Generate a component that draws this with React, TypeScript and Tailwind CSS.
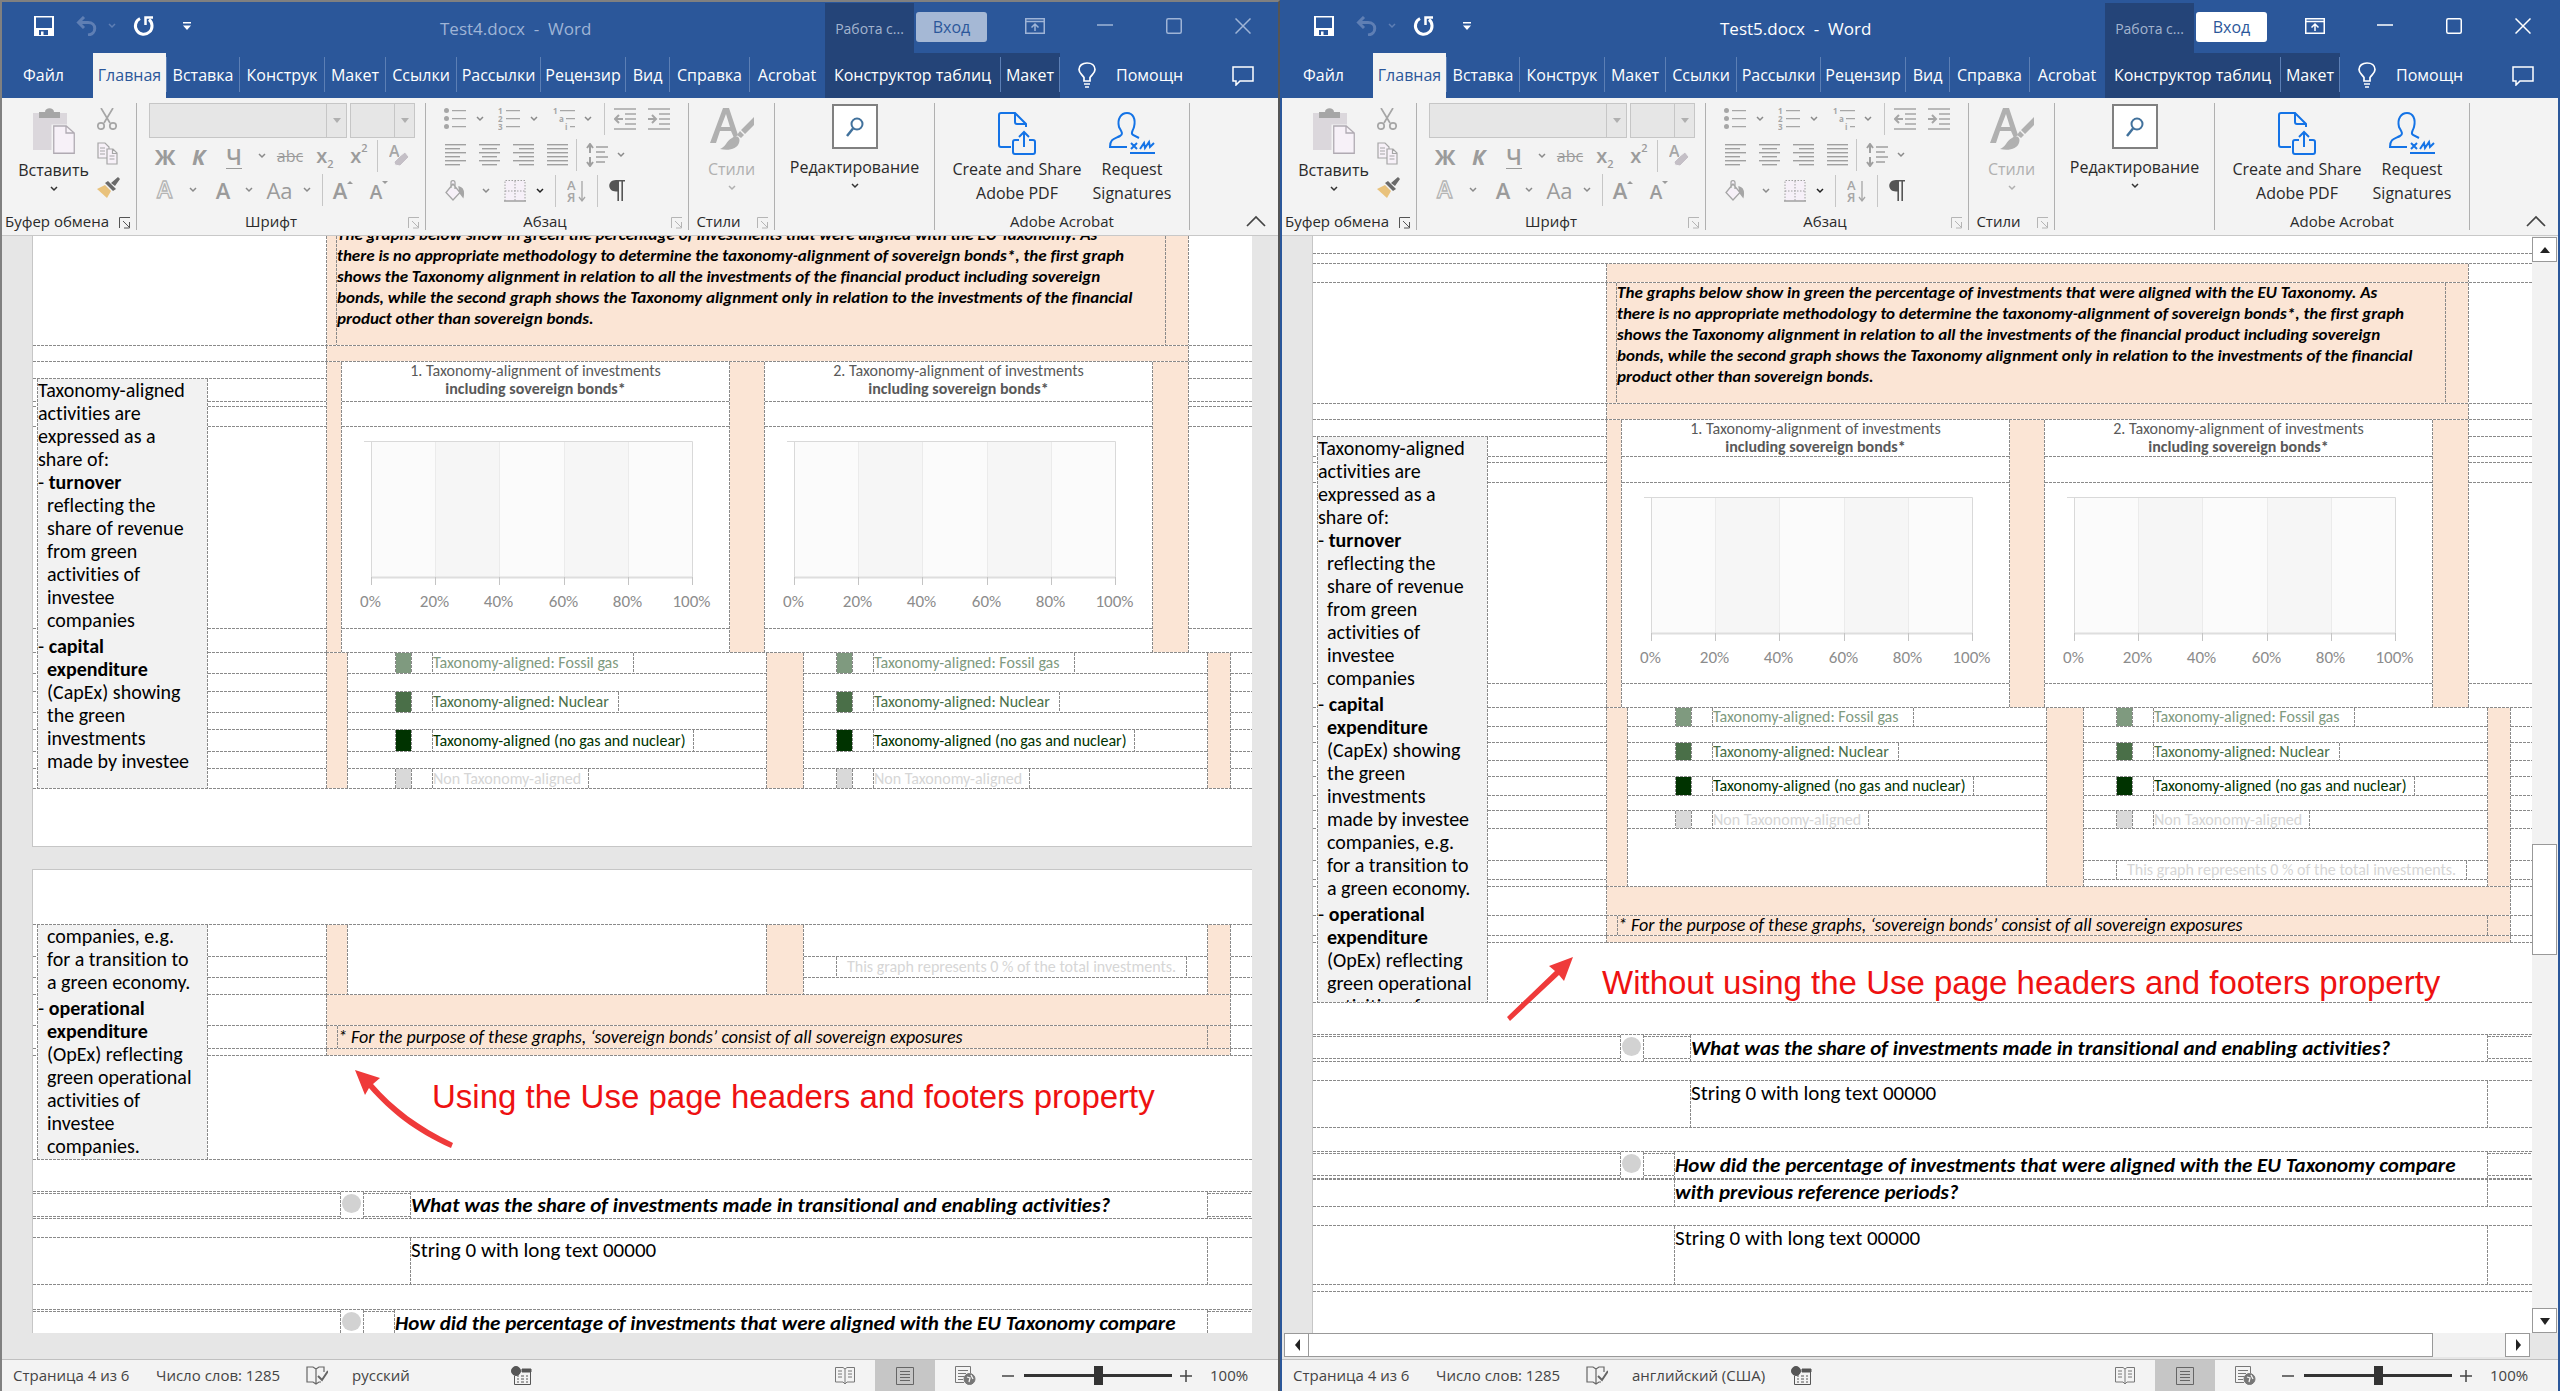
import type { ReactNode } from "react";

const H_LINE = "h-px shrink-0 bg-[repeating-linear-gradient(90deg,#8a8a8a_0_3px,transparent_3px_4px)]";
const V_LINE = "w-px shrink-0 self-stretch bg-[repeating-linear-gradient(180deg,#8a8a8a_0_3px,transparent_3px_4px)]";
const PEACH = "bg-[#fbe5d5]";

const H = () => <div className={H_LINE} />;
const V = () => <div className={V_LINE} />;

/* ---------- small drawing helpers ---------- */

function Chevron({ color = "#8a8a8a" }: { color?: string }) {
  return (
    <svg width="8" height="6" viewBox="0 0 8 6" fill="none" stroke={color} strokeWidth="1.5">
      <path d="M1 1l3 3 3-3" />
    </svg>
  );
}

function Launcher({ dark = false }: { dark?: boolean }) {
  return (
    <svg width="12" height="12" viewBox="0 0 12 12" fill="none" stroke={dark ? "#555" : "#b5b5b5"}>
      <path d="M0.5 11V0.5H11M4 4l6 6M10.5 5v6H5" />
    </svg>
  );
}

function Tool({ label, width, children }: { label: string; width: string; children: ReactNode }) {
  return (
    <button type="button" aria-label={label} className={`flex h-full shrink-0 items-center justify-center ${width}`}>
      {children}
    </button>
  );
}

function Sep({ className = "" }: { className?: string }) {
  return <div className={`w-px shrink-0 self-stretch bg-[#c6c6c6] ${className}`} />;
}

/* ---------- title bar ---------- */

function TitleBar({ title, active }: { title: string; active: boolean }) {
  const ink = active ? "text-white" : "text-[#9fb4d6]";
  return (
    <header className="flex h-[51px] shrink-0 items-stretch bg-[#2b579a] text-white">
      <div className="flex w-[428px] shrink-0 items-center pb-[3px] pl-8">
        <Tool label="Сохранить" width="w-5">
          <svg width="20" height="20" viewBox="0 0 20 20">
            <path fill="#fff" fillRule="evenodd" d="M0 0h20v20H0zM2 1.5v10.5h16V1.5zM5 14v5h2v-3.500h2.500V19H14v-5z" />
          </svg>
        </Tool>
        <Tool label="Отменить" width="ml-[22px] w-[22px]">
          <svg width="22" height="20" viewBox="0 0 22 20" fill="none" stroke="#5f7fb4" strokeWidth="3">
            <path d="M8 1L2.500 6.500 8 12M3 6.500h9c9 0 9 11.500 0 12.500" />
          </svg>
        </Tool>
        <Tool label="Варианты отмены" width="ml-1 w-5">
          <Chevron color="#5f7fb4" />
        </Tool>
        <Tool label="Повторить" width="ml-[11px] w-[22px]">
          <svg width="22" height="22" viewBox="0 0 22 22" fill="none" stroke="#fff" strokeWidth="3">
            <path d="M7 3.500A8.300 8.300 0 1 0 16 4.500" />
            <path d="M12.500 10V2.500H20" strokeWidth="2.500" />
          </svg>
        </Tool>
        <Tool label="Настройка панели быстрого доступа" width="ml-[22px] w-5">
          <svg width="8" height="8" viewBox="0 0 8 8" fill="#fff">
            <path d="M0 0h8v1.500H0zM0 3.500h8L4 8z" />
          </svg>
        </Tool>
      </div>
      <h1 className={`flex-1 whitespace-pre pl-[10px] pt-[14px] text-[17px] leading-[26px] ${ink}`}>{title}</h1>
      <div className="mt-px flex w-[89px] items-center justify-center bg-[#244478] text-[14px] text-[#a3b4cf]">Работа с...</div>
      <button
        type="button"
        className={`ml-0.5 mt-[10px] h-[30px] w-[71px] rounded-[3px] text-[16px] leading-[30px] text-[#2b579a] ${active ? "bg-white" : "bg-[#a5b8d5]"}`}
      >
        Вход
      </button>
      <div className={`flex w-[291px] items-center pb-[3px] pl-[38px] ${ink}`}>
        <Tool label="Параметры отображения ленты" width="w-5">
          <svg width="20" height="16" viewBox="0 0 20 16" fill="none" stroke="currentColor" strokeWidth="1.5">
            <path d="M0.75 0.75h18.500v14.500H0.750zM1 3.500h18M10 13V6.500M6.500 9.500L10 6l3.500 3.500" />
          </svg>
        </Tool>
        <Tool label="Свернуть" width="ml-[50px] w-5">
          <svg width="16" height="16" viewBox="0 0 16 16" stroke="currentColor" strokeWidth="1.5">
            <path d="M0 7h16" />
          </svg>
        </Tool>
        <Tool label="Развернуть" width="ml-[49px] w-5">
          <svg width="16" height="16" viewBox="0 0 16 16" fill="none" stroke="currentColor" strokeWidth="1.5">
            <rect x="0.75" y="0.75" width="14.5" height="14.5" rx="1.5" />
          </svg>
        </Tool>
        <Tool label="Закрыть" width="ml-[49px] w-5">
          <svg width="16" height="16" viewBox="0 0 16 16" stroke="currentColor" strokeWidth="1.5">
            <path d="M0.5 0.5l15 15M15.500 0.500l-15 15" />
          </svg>
        </Tool>
      </div>
    </header>
  );
}

/* ---------- ribbon tabs ---------- */

const TABS: [string, string][] = [
  ["Вставка", "w-[73px]"],
  ["Конструк", "w-[85px]"],
  ["Макет", "w-[61px]"],
  ["Ссылки", "w-[71px]"],
  ["Рассылки", "w-[84px]"],
  ["Рецензир", "w-[85px]"],
  ["Вид", "w-[44px]"],
  ["Справка", "w-[80px]"],
  ["Acrobat", "w-[75px]"],
];

function TabBar() {
  return (
    <nav className="flex h-[45px] shrink-0 items-stretch bg-[#2b579a] text-[16px] text-white">
      <button type="button" className="w-[91px] pb-0.5 pr-2">Файл</button>
      <button type="button" className="w-[73px] bg-[#f3f3f3] pb-0.5 text-[#2b579a]">Главная</button>
      {TABS.map(([name, width]) => (
        <button key={name} type="button" className={`mb-1.5 mt-1 shrink-0 whitespace-nowrap border-l border-[#5c7fb5] ${width}`}>
          {name}
        </button>
      ))}
      <div className="ml-px flex bg-[#244478] pb-1.5 pt-1">
        <button type="button" className="w-[175px] whitespace-nowrap">Конструктор таблиц</button>
        <button type="button" className="w-[60px] border-x border-[#5c7fb5]">Макет</button>
      </div>
      <button type="button" className="flex items-center gap-5 pb-0.5 pl-[18px]">
        <svg width="18" height="26" viewBox="0 0 18 26" fill="none" stroke="#fff" strokeWidth="1.7">
          <path d="M6 19v-3.500C4 12.500 1 11 1 7.500 1 3.500 4.500 1 9 1s8 2.500 8 6.500c0 3.500-3 5-5 8V19zM6 22h6M7 25h4" />
        </svg>
        Помощн
      </button>
      <button type="button" aria-label="Примечания" className="ml-auto pr-6">
        <svg width="22" height="20" viewBox="0 0 22 20" fill="none" stroke="#fff" strokeWidth="1.5">
          <path d="M1 1h20v14H8l-4 4v-4H1z" />
        </svg>
      </button>
    </nav>
  );
}

/* ---------- ribbon ---------- */

function Group({ label, width, labelClass = "text-center", launcher, children }: {
  label?: string;
  width: string;
  labelClass?: string;
  launcher?: "dark" | "light";
  children: ReactNode;
}) {
  return (
    <section className={`my-[5px] flex shrink-0 flex-col border-r border-[#b0b0b0] ${width}`}>
      <div className="h-[109px]">{children}</div>
      <div className="relative flex h-[18px] items-center">
        <span className={`w-full whitespace-nowrap text-[15px] leading-[22px] ${labelClass}`}>{label}</span>
        {launcher && (
          <button type="button" aria-label={`Параметры: ${label}`} className="absolute right-[5px] top-[5px]">
            <Launcher dark={launcher === "dark"} />
          </button>
        )}
      </div>
    </section>
  );
}

function ListIcon({ kind }: { kind: "dot" | "num" | "multi" }) {
  return (
    <svg width="22" height="22" viewBox="0 0 22 22" fill="#a6a6a6" className="font-['Open_Sans',sans-serif] text-[8px] font-bold">
      {kind === "dot" && <path d="M8 2h14v1.300H8zM8 10h14v1.300H8zM8 18h14v1.300H8zM0 2.600a2.500 2.500 0 1 1 5 0 2.500 2.500 0 1 1-5 0M0 10.600a2.500 2.500 0 1 1 5 0 2.500 2.500 0 1 1-5 0M0 18.600a2.500 2.500 0 1 1 5 0 2.500 2.500 0 1 1-5 0" />}
      {kind === "num" && (
        <>
          <path d="M8 2h14v1.300H8zM8 10h14v1.300H8zM8 18h14v1.300H8z" />
          <text x="0" y="6">1</text>
          <text x="0" y="14">2</text>
          <text x="0" y="22">3</text>
        </>
      )}
      {kind === "multi" && (
        <>
          <path d="M7 2h15v1.300H7zM13 10h9v1.300h-9zM17 18h5v1.300h-5z" />
          <text x="0" y="6">1</text>
          <text x="6" y="14">a</text>
          <text x="12" y="22">i</text>
        </>
      )}
    </svg>
  );
}

function AlignIcon({ kind }: { kind: "left" | "center" | "right" | "full" }) {
  const start = { left: 0, center: 3, right: 6, full: 0 }[kind];
  const short = kind === "full" ? 21 : 15;
  return (
    <svg width="21" height="22" viewBox="0 0 21 22" fill="#a0a0a0">
      {[0, 4, 8, 12, 16, 20].map((y, i) => (
        <rect key={y} x={i % 2 ? start : 0} y={y} width={i % 2 ? short : 21} height="1.4" />
      ))}
    </svg>
  );
}

function IndentIcon({ out }: { out: boolean }) {
  return (
    <svg width="22" height="22" viewBox="0 0 22 22" fill="none" stroke="#a6a6a6" strokeWidth="1.3">
      <path d="M0 1h22M11 6h11M11 11h11M11 16h11M0 21h22" />
      <path strokeWidth="2" d={out ? "M9 11H1M5 7l-4 4 4 4" : "M0 11h8M4 7l4 4-4 4"} />
    </svg>
  );
}

function FontGroup() {
  const glyph = "text-[22px] leading-6 text-[#9b9b9b]";
  return (
    <div className="flex flex-col pl-3">
      <div className="flex gap-[3px]">
        {[
          ["Шрифт", "w-[198px]", "w-[20px]"],
          ["Размер шрифта", "w-[65px]", "w-[20px]"],
        ].map(([label, width, arrow]) => (
          <div key={label} className={`relative flex h-[35px] border border-[#c6c6c6] bg-[#e6e6e6] ${width}`}>
            <select aria-label={label} disabled className="w-full appearance-none bg-transparent opacity-0">
              <option />
            </select>
            <div className={`pointer-events-none flex shrink-0 items-center justify-center border-l border-[#c6c6c6] ${arrow}`}>
              <svg width="8" height="5" viewBox="0 0 8 5" fill="#b0b0b0"><path d="M0 0h8L4 5z" /></svg>
            </div>
          </div>
        ))}
      </div>
      <div className="mt-0.5 flex h-8 items-center">
        <Tool label="Полужирный" width="w-8"><span className={`font-bold ${glyph}`}>Ж</span></Tool>
        <Tool label="Курсив" width="w-[35px]"><span className={`font-bold italic ${glyph}`}>К</span></Tool>
        <Tool label="Подчеркнутый" width="w-9"><span className={`border-b border-[#9b9b9b] font-semibold ${glyph}`}>Ч</span></Tool>
        <Tool label="Варианты подчеркивания" width="w-5"><Chevron /></Tool>
        <Tool label="Зачеркнутый" width="w-[36px]"><span className="text-[16px] leading-6 text-[#9b9b9b] line-through">abc</span></Tool>
        <Tool label="Подстрочный" width="w-[34px]">
          <span className="text-[20px] font-semibold leading-6 text-[#9b9b9b]">x</span>
          <span className="self-end text-[11px] font-semibold leading-4 text-[#9b9b9b]">2</span>
        </Tool>
        <Tool label="Надстрочный" width="w-[34px]">
          <span className="text-[20px] font-semibold leading-6 text-[#9b9b9b]">x</span>
          <span className="self-start text-[11px] font-semibold leading-4 text-[#9b9b9b]">2</span>
        </Tool>
        <Sep className="ml-px" />
        <Tool label="Удалить форматирование" width="w-[42px]">
          <svg width="20" height="22" viewBox="0 0 20 22" fill="#a6a6a6" className="font-['Open_Sans',sans-serif] text-[16px] font-semibold">
            <text x="0" y="12">A</text>
            <path d="M11 11l5-4 4 5-9 9-5-1-1-3z" fill="#c4bfc6" stroke="#f3f3f3" />
          </svg>
        </Tool>
      </div>
      <div className="mt-0.5 flex h-8 items-center">
        <Tool label="Текстовые эффекты" width="w-8">
          <svg width="20" height="22" viewBox="0 0 20 22" fill="#f6f6f6" stroke="#b4b4b4" strokeWidth="1.3" className="font-['Open_Sans',sans-serif] text-[23px] font-semibold">
            <text x="2" y="19">A</text>
          </svg>
        </Tool>
        <Tool label="Варианты эффектов" width="w-[23px]"><Chevron /></Tool>
        <Tool label="Цвет текста" width="ml-[3px] w-8"><span className={`font-semibold ${glyph}`}>A</span></Tool>
        <Tool label="Варианты цвета" width="w-[20px]"><Chevron /></Tool>
        <Tool label="Регистр" width="w-[41px]"><span className={glyph}>Aa</span></Tool>
        <Tool label="Варианты регистра" width="w-[14px]"><Chevron /></Tool>
        <Sep className="ml-2" />
        <Tool label="Увеличить размер" width="w-[40px]">
          <span className={`font-semibold ${glyph}`}>A</span>
          <svg width="6" height="20" viewBox="0 0 6 20" fill="#9b9b9b"><path d="M0 4l3-3 3 3z" /></svg>
        </Tool>
        <Tool label="Уменьшить размер" width="w-[32px]">
          <span className="pt-1 text-[19px] font-semibold leading-6 text-[#9b9b9b]">A</span>
          <svg width="6" height="20" viewBox="0 0 6 20" fill="#9b9b9b"><path d="M0 1l3 3 3-3z" /></svg>
        </Tool>
      </div>
    </div>
  );
}

function ParagraphGroup() {
  return (
    <div className="flex flex-col pl-3">
      <div className="flex h-8 items-center">
        <Tool label="Маркеры" width="ml-1 w-[25px]"><ListIcon kind="dot" /></Tool>
        <Tool label="Варианты маркеров" width="ml-1 w-[18px]"><Chevron /></Tool>
        <Tool label="Нумерация" width="ml-2 w-[24px]"><ListIcon kind="num" /></Tool>
        <Tool label="Варианты нумерации" width="w-[26px]"><Chevron /></Tool>
        <Tool label="Многоуровневый список" width="ml-1 w-[25px]"><ListIcon kind="multi" /></Tool>
        <Tool label="Варианты списка" width="w-[24px]"><Chevron /></Tool>
        <Sep className="ml-1" />
        <Tool label="Уменьшить отступ" width="ml-2 w-6"><IndentIcon out /></Tool>
        <Tool label="Увеличить отступ" width="ml-[10px] w-6"><IndentIcon out={false} /></Tool>
      </div>
      <div className="mt-1 flex h-8 items-center">
        {(["left", "center", "right", "full"] as const).map((kind) => (
          <Tool key={kind} label={kind} width="w-[34px]"><AlignIcon kind={kind} /></Tool>
        ))}
        <Sep className="ml-0.5" />
        <Tool label="Интервал" width="w-[40px]">
          <svg width="22" height="24" viewBox="0 0 22 24" fill="none" stroke="#a0a0a0" strokeWidth="1.4">
            <path d="M10 4h12M10 9h9M10 14h12M10 19h9" />
            <path strokeWidth="2" d="M4 1v9M4 14v9M1 5l3-4 3 4M1 19l3 4 3-4" />
          </svg>
        </Tool>
        <Tool label="Варианты интервала" width="w-2"><Chevron /></Tool>
      </div>
      <div className="mt-1 flex h-8 items-center">
        <Tool label="Заливка" width="w-[34px]">
          <svg width="20" height="22" viewBox="0 0 20 22" fill="#f6f0f8" stroke="#a6a6a6" strokeWidth="1.3">
            <path d="M8 4L1 12.500 8 20l7-7.500zM6 8V2.500C6 0 10 0 10 2.500V9" />
            <path d="M14 7c4 1 5 5 4 10l-3-4z" fill="#a6a6a6" />
          </svg>
        </Tool>
        <Tool label="Варианты заливки" width="ml-[5px] w-[18px]"><Chevron /></Tool>
        <Tool label="Границы" width="ml-2 w-[24px]">
          <svg width="22" height="22" viewBox="0 0 22 22" fill="#f6f0f8" stroke="#a0a0a0">
            <path strokeDasharray="1.5 1.5" d="M1 21V0.500h20V21M11 1v20M1 11h20" />
            <path d="M0 21h22" strokeWidth="1.5" />
          </svg>
        </Tool>
        <Tool label="Варианты границ" width="w-[26px]"><Chevron color="#222" /></Tool>
        <Sep className="ml-[2px]" />
        <Tool label="Сортировка" width="w-[41px]">
          <svg width="20" height="24" viewBox="0 0 20 24" fill="#a6a6a6" className="font-['Open_Sans',sans-serif] text-[13px] font-semibold">
            <text x="0" y="11">А</text>
            <text x="0" y="23">Я</text>
            <path d="M15 2v19M12 18l3 4 3-4" fill="none" stroke="#a6a6a6" strokeWidth="1.3" />
          </svg>
        </Tool>
        <Sep />
        <Tool label="Знаки абзаца" width="w-[38px]">
          <svg width="16" height="22" viewBox="0 0 16 22" fill="#555">
            <path d="M16 0v1.600h-2V21h-1.600V1.600H10V21H8.400V11.500H7C-2 11.500-2 0 7 0z" />
          </svg>
        </Tool>
      </div>
    </div>
  );
}

function Ribbon() {
  return (
    <div className="flex h-[138px] shrink-0 items-stretch border-b border-[#c8c8c8] bg-[#f3f3f3] text-[#2a2a2a]">
      <Group label="Буфер обмена" width="w-[135px]" labelClass="pl-[3px] text-left" launcher="dark">
        <div className="flex">
          <button type="button" className="flex w-[87px] flex-col items-center pl-4 pt-[5px] text-[16px]">
            <svg width="42" height="46" viewBox="0 0 42 46">
              <path d="M0 5h34v37H0z" fill="#dbd7dc" />
              <path d="M6 4h6c0-5 9-5 9 0h6v6H6z" fill="#a6a6a6" />
              <path d="M20 18h14l8 8v20H20z" fill="#f7f1f8" stroke="#f3f3f3" strokeWidth="3" />
              <path d="M20.750 18h12.500l8 7v20.250H20.750zM33 18v7h8" fill="#f7f1f8" stroke="#b0aab2" strokeWidth="1.3" />
            </svg>
            <span className="pt-1 leading-6">Вставить</span>
            <span className="pt-1"><Chevron color="#333" /></span>
          </button>
          <div className="flex flex-1 flex-col gap-3 pl-2 pt-[5px]">
            <button type="button" aria-label="Вырезать">
              <svg width="20" height="22" viewBox="0 0 20 22" fill="none" stroke="#a6a6a6" strokeWidth="1.7">
                <path d="M4 0l9 15M16 0L7 15" />
                <circle cx="4" cy="18" r="3.2" />
                <circle cx="16" cy="18" r="3.2" />
              </svg>
            </button>
            <button type="button" aria-label="Копировать">
              <svg width="21" height="23" viewBox="0 0 21 23" fill="#f7f1f8" stroke="#a6a6a6" strokeWidth="1.2">
                <path d="M1 1h7l4 4v11H1zM3 6h5M3 9h5M3 12h5" />
                <path d="M10 7h6l4 4v11H10zM15.500 7v4.500H20M12.500 14h5M12.500 17h5" />
              </svg>
            </button>
            <button type="button" aria-label="Формат по образцу">
              <svg width="23" height="21" viewBox="0 0 23 21">
                <path d="M0 12l8-4 6 6-4 7z" fill="#e9c27c" />
                <path d="M8 6l3-2 8 8-3 2zM14 6l7-6 2 2-5 7z" fill="#6a6a6a" />
              </svg>
            </button>
          </div>
        </div>
      </Group>
      <Group label="Шрифт" width="w-[289px]" labelClass="pr-5 text-center" launcher="light"><FontGroup /></Group>
      <Group label="Абзац" width="w-[263px]" labelClass="pr-6 text-center" launcher="light"><ParagraphGroup /></Group>
      <Group label="Стили" width="w-[86px]" labelClass="pr-[26px] text-center" launcher="light">
        <button type="button" className="flex w-full flex-col items-center pt-[5px] text-[16px] text-[#b0b0b0]">
          <svg width="44" height="43" viewBox="0 0 44 43" fill="#b0b0b0">
            <path d="M13 0h6l9 27-4 3-3-7H10L6 35H0zM16 6l-5 13h9z" fillRule="evenodd" />
            <path d="M44 9v8l-9 9-4-4zM30 23l4 4-3 3-4-3zM22 30c5-4 9 0 7 5-2 6-10 8-19 6 6-2 6-8 12-11z" />
          </svg>
          <span className="pt-1.5 leading-6">Стили</span>
          <span className="pt-1"><Chevron color="#b0b0b0" /></span>
        </button>
      </Group>
      <Group width="w-[160px]">
        <button type="button" className="flex w-full flex-col items-center pt-px text-[16px]">
          <span className="flex h-[45px] w-[46px] items-center justify-center border-2 border-[#808080] bg-white">
            <svg width="18" height="20" viewBox="0 0 18 20" fill="none" stroke="#41719c" strokeWidth="2">
              <circle cx="11" cy="7" r="5.5" />
              <path d="M7 11.500L1 19" strokeWidth="2.5" />
            </svg>
          </span>
          <span className="pt-1.5 leading-6">Редактирование</span>
          <span className="pt-1"><Chevron color="#333" /></span>
        </button>
      </Group>
      <Group label="Adobe Acrobat" width="w-[255px]">
        <div className="flex pl-[11px] pt-[9px] text-[16px] leading-6">
          <button type="button" className="flex w-[142px] flex-col items-center whitespace-nowrap">
            <svg width="38" height="43" viewBox="0 0 38 43" fill="none" stroke="#1473e6" strokeWidth="2">
              <path d="M13 35H3a2 2 0 0 1-2-2V3a2 2 0 0 1 2-2h14l11 11v3M17 1v9a2 2 0 0 0 2 2h9" />
              <path d="M21 28h-4a2 2 0 0 0-2 2v10a2 2 0 0 0 2 2h18a2 2 0 0 0 2-2V30a2 2 0 0 0-2-2h-4M26 35V20M21 25l5-5 5 5" />
            </svg>
            <span className="pt-0.5">Create and Share</span>
            <span>Adobe PDF</span>
          </button>
          <button type="button" className="flex w-[88px] flex-col items-center">
            <svg width="46" height="43" viewBox="0 0 46 43" fill="none" stroke="#1473e6" strokeWidth="2">
              <path d="M18 35H1c0-8 4-8 10-11 4-2 1-5-1-9-2-8 2-14 8-14s9 6 7 14c-1 4-4 6-1 8l6 3" />
              <path d="M22 31l6 6M28 31l-6 6M31 37l4-6 1 5 4-6 1 5 4-4M21 41h25" />
            </svg>
            <span className="pt-0.5">Request</span>
            <span>Signatures</span>
          </button>
        </div>
      </Group>
      <button type="button" aria-label="Свернуть ленту" className="ml-auto self-end pb-2 pr-3">
        <svg width="20" height="12" viewBox="0 0 20 12" fill="none" stroke="#444" strokeWidth="1.7">
          <path d="M1 11l9-9 9 9" />
        </svg>
      </button>
    </div>
  );
}

/* ---------- document pieces ---------- */

/** A column of table rows: every height is followed by a dashed rule, except the last. */
function Rows({ heights, className = "" }: { heights: string[]; className?: string }) {
  return (
    <div className={`flex flex-col ${className}`}>
      {heights.map((h, i) => (
        <div key={i} className="flex shrink-0 flex-col">
          <div className={h} />
          {i < heights.length - 1 && <H />}
        </div>
      ))}
    </div>
  );
}

function SideNote({ rows, children }: { rows: string[]; children: ReactNode }) {
  return (
    <div className="flex">
      <Rows heights={rows} className="w-1 shrink-0" />
      <V />
      <div className="relative w-[169px] shrink-0 self-stretch bg-[#f2f2f2]">
        <div className="absolute inset-0 overflow-hidden whitespace-nowrap text-[20px] leading-[23px] text-black">
          {children}
        </div>
      </div>
      <V />
      <Rows heights={rows} className="w-[118px] shrink-0" />
    </div>
  );
}

function Item({ term, lines }: { term?: string; lines: string[] }) {
  return (
    <div className="mb-[3px]">
      {term && <div>- <b>{term}</b></div>}
      {lines.map((line) => (
        <div key={line} className="pl-[9px]">{line === "expenditure" ? <b>{line}</b> : line}</div>
      ))}
    </div>
  );
}

const INTRO = ["Taxonomy-aligned", "activities are", "expressed as a", "share of:"];
const TURNOVER = ["reflecting the", "share of revenue", "from green", "activities of", "investee", "companies"];
const CAPEX_A = ["expenditure", "(CapEx) showing", "the green", "investments", "made by investee"];
const CAPEX_B = ["companies, e.g.", "for a transition to", "a green economy."];
const OPEX = ["expenditure", "(OpEx) reflecting", "green operational", "activities of", "investee", "companies."];

function Callout({ className }: { className: string }) {
  return (
    <div className={`flex ${className}`}>
      <div className="w-[293px] shrink-0" />
      <V />
      <div className={`w-[9px] shrink-0 ${PEACH}`} />
      <div className={`flex w-[830px] shrink-0 ${PEACH}`}>
        <V />
        <div className="flex min-w-0 flex-1 flex-col justify-end whitespace-nowrap pb-4 text-[17px] font-bold italic leading-[21px] text-black">
          <p>The graphs below show in green the percentage of investments that were aligned with the EU Taxonomy. As</p>
          <p>there is no appropriate methodology to determine the taxonomy-alignment of sovereign bonds*, the first graph</p>
          <p>shows the Taxonomy alignment in relation to all the investments of the financial product including sovereign</p>
          <p>bonds, while the second graph shows the Taxonomy alignment only in relation to the investments of the financial</p>
          <p>product other than sovereign bonds.</p>
        </div>
        <V />
      </div>
      <div className={`w-[22px] shrink-0 ${PEACH}`} />
      <V />
      <div className="flex-1" />
    </div>
  );
}

function PeachBar({ className }: { className: string }) {
  return (
    <div className={`flex ${className}`}>
      <div className="w-[293px] shrink-0" />
      <V />
      <div className={`w-[861px] shrink-0 ${PEACH}`} />
      <V />
    </div>
  );
}

const TICKS = ["0%", "20%", "40%", "60%", "80%", "100%"];

function Plot() {
  return (
    <svg width="387" height="200" viewBox="0 0 387 200" className="block">
      <rect x="29" y="14" width="321" height="136" fill="#fbfbfb" />
      <rect x="93" y="14" width="64" height="136" fill="#f6f6f6" />
      <rect x="222" y="14" width="64" height="136" fill="#f6f6f6" />
      <path d="M93.500 14v136M157.500 14v136M222.500 14v136M286.500 14v136" stroke="#ebebeb" />
      <path d="M22 14.500h328.500V150M29.500 14.500V150" fill="none" stroke="#d9d9d9" />
      <path d="M29 150.500h322" stroke="#dedede" strokeWidth="2" />
      {TICKS.map((tick, i) => {
        const x = 29.5 + Math.round(i * 64.2);
        return (
          <g key={tick}>
            <path d={`M${x} 150v8`} stroke="#c4c4c4" />
            <text x={x - 1} y="180" textAnchor="middle" fill="#8c8c8c" className="text-[17px]">{tick}</text>
          </g>
        );
      })}
    </svg>
  );
}

function Chart({ n, tall }: { n: number; tall: boolean }) {
  return (
    <div className="flex w-[387px] shrink-0 flex-col">
      <div className={`text-center text-[16px] leading-[18px] text-[#595959] ${tall ? "h-[39px]" : "h-[36px]"}`}>
        <p>{n}. Taxonomy-alignment of investments</p>
        <p className="font-bold">including sovereign bonds*</p>
      </div>
      <H />
      <div className={tall ? "h-6" : "h-[25px]"} />
      <H />
      <div className={tall ? "h-[201px]" : "h-[200px]"}><Plot /></div>
      <H />
      <div className="h-[23px]" />
    </div>
  );
}

function Charts({ tall, fillRows }: { tall: boolean; fillRows: string[] }) {
  return (
    <div className="flex">
      <V />
      <div className={`w-[14px] shrink-0 ${PEACH}`} />
      <V />
      <Chart n={1} tall={tall} />
      <V />
      <div className={`w-[34px] shrink-0 ${PEACH}`} />
      <V />
      <Chart n={2} tall={tall} />
      <V />
      <div className={`w-[35px] shrink-0 ${PEACH}`} />
      <V />
      <Rows heights={fillRows} className="flex-1" />
    </div>
  );
}

const LEGEND: [string, string, string, string][] = [
  ["Taxonomy-aligned: Fossil gas", "w-[200px]", "bg-[#7f9a7f]", "text-[#7f9a7f]"],
  ["Taxonomy-aligned: Nuclear", "w-[185px]", "bg-[#4a6f48]", "text-[#4a6f48]"],
  ["Taxonomy-aligned (no gas and nuclear)", "w-[260px]", "bg-[#003300]", "text-[#003300]"],
  ["Non Taxonomy-aligned", "w-[155px]", "bg-[#d9d9d9]", "text-[#d6d6d6]"],
];

function Legend({ heights, indent, width }: { heights: string[]; indent: string; width: string }) {
  return (
    <div className={`flex shrink-0 flex-col ${width}`}>
      {heights.map((h, i) => {
        const item = i % 2 === 0 ? LEGEND[i / 2] : undefined;
        return (
          <div key={i} className="flex flex-col">
            <div className={`flex items-stretch ${h}`}>
              {item && (
                <>
                  <div className={`shrink-0 ${indent}`} />
                  <V />
                  <div className={`w-[15px] shrink-0 ${item[2]}`} />
                  <V />
                  <div className="w-5 shrink-0" />
                  <V />
                  <div className={`flex shrink-0 items-center whitespace-nowrap text-[16px] leading-[18px] ${item[1]} ${item[3]}`}>{item[0]}</div>
                  <V />
                </>
              )}
            </div>
            {i < heights.length - 1 && <H />}
          </div>
        );
      })}
    </div>
  );
}

function LegendBand({ left, right, fill }: { left: ReactNode; right: ReactNode; fill: string[] }) {
  return (
    <div className="flex">
      <V />
      <div className={`w-5 shrink-0 ${PEACH}`} />
      <V />
      {left}
      <V />
      <div className={`w-9 shrink-0 ${PEACH}`} />
      <V />
      {right}
      <V />
      <div className={`w-[22px] shrink-0 ${PEACH}`} />
      <V />
      <Rows heights={fill} className="flex-1" />
    </div>
  );
}

function ShareNote({ h }: { h: string }) {
  return (
    <div className={`flex ${h}`}>
      <div className="w-8 shrink-0" />
      <V />
      <div className="flex w-[349px] shrink-0 items-center justify-center whitespace-nowrap text-[16px] leading-[18px] text-[#d6d6d6]">
        This graph represents 0 % of the total investments.
      </div>
      <V />
    </div>
  );
}

function Footnote({ rows }: { rows: [string, string, string] }) {
  return (
    <div className="flex flex-col">
      <div className={`flex ${rows[0]}`}><V /><div className={`w-[903px] ${PEACH}`} /><V /></div>
      <H />
      <div className={`flex ${rows[1]}`}>
        <V />
        <div className={`flex w-[903px] shrink-0 ${PEACH}`}>
          <div className="w-[10px] shrink-0" />
          <V />
          <div className="flex flex-1 items-center whitespace-nowrap text-[18px] italic leading-[19px] text-black">
            * For the purpose of these graphs, ‘sovereign bonds’ consist of all sovereign exposures
          </div>
          <V />
          <div className="w-[22px] shrink-0" />
        </div>
        <V />
      </div>
      <H />
      <div className={`flex ${rows[2]}`}><V /><div className={`w-[903px] ${PEACH}`} /><V /></div>
      <H />
    </div>
  );
}

function Question({ text, lead, width, inner }: { text: string; lead: string; width: string; inner: string }) {
  return (
    <div className="flex shrink-0 items-stretch">
      <div className="flex w-[307px] shrink-0 flex-col"><div className="h-px" /><H /><div className={inner} /><H /></div>
      <V />
      <div className="w-[22px] shrink-0 pl-px pt-0.5">
        <div className="size-[19px] rounded-full bg-[#d2d2d2]" />
      </div>
      <V />
      <div className={`flex shrink-0 flex-col ${lead}`}><div className="h-px" /><H /><div className={inner} /><H /></div>
      <V />
      <div className={`shrink-0 whitespace-nowrap text-[21px] font-bold italic leading-[26px] text-black ${width}`}>{text}</div>
      <V />
      <div className="flex flex-1 flex-col"><div className="h-px" /><H /><div className={inner} /><H /></div>
    </div>
  );
}

function Answer({ lead, width, h, bold = false, children }: { lead: string; width: string; h: string; bold?: boolean; children: ReactNode }) {
  return (
    <div className={`flex shrink-0 ${h}`}>
      <div className={`shrink-0 ${lead}`} />
      <V />
      <div className={`shrink-0 whitespace-nowrap text-[21px] leading-6 text-black ${width} ${bold ? "font-bold italic" : ""}`}>{children}</div>
      <V />
    </div>
  );
}

const HEAD_1 = "What was the share of investments made in transitional and enabling activities?";
const HEAD_2 = "How did the percentage of investments that were aligned with the EU Taxonomy compare";
const STRING = "String 0 with long text 00000";

/* ---------- documents ---------- */

const L_NOTE = ["h-[22px]", "h-1", "h-[19px]", "h-[201px]", "h-[23px]", "h-5", "h-[17px]", "h-5", "h-4", "h-[21px]", "h-4", "h-[19px]"];
const L_LEGEND = ["h-5", "h-[17px]", "h-5", "h-4", "h-[21px]", "h-4", "h-[19px]"];
const R_NOTE = ["h-[19px]", "h-[5px]", "h-[19px]", "h-[200px]", "h-[23px]", "h-[18px]", "h-[15px]", "h-[17px]", "h-[15px]", "h-[18px]", "h-[14px]", "h-[17px]", "h-[31px]", "h-[18px]", "h-[6px]", "h-[28px]", "h-[19px]", "h-[6px]", "h-[59px]"];
const R_LEGEND = ["h-[18px]", "h-[15px]", "h-[17px]", "h-[15px]", "h-[18px]", "h-[14px]", "h-[17px]"];

function SplitDocument() {
  return (
    <main className="relative flex min-h-0 flex-1 flex-col bg-[#e6e6e6] pb-[26px] pl-[30px] pr-[26px]">
      <div className="flex shrink-0 flex-col border-b border-l border-[#c6c6c6] bg-white">
        <Callout className="h-[109px] overflow-hidden" />
        <H />
        <PeachBar className="h-[15px]" />
        <H />
        <div className="flex">
          <div className="flex w-[293px] shrink-0 flex-col">
            <div className="h-4" />
            <H />
            <SideNote rows={L_NOTE}>
              {INTRO.map((line) => <div key={line}>{line}</div>)}
              <Item term="turnover" lines={TURNOVER} />
              <Item term="capital" lines={CAPEX_A} />
            </SideNote>
          </div>
          <div className="flex flex-1 flex-col">
            <Charts tall fillRows={["h-4", "h-[22px]", "h-1", "h-[19px]", "h-[201px]", "h-[23px]"]} />
            <H />
            <LegendBand
              left={<Legend heights={L_LEGEND} indent="w-[47px]" width="w-[418px]" />}
              right={<Legend heights={L_LEGEND} indent="w-8" width="w-[403px]" />}
              fill={L_LEGEND}
            />
          </div>
        </div>
        <H />
        <div className="h-[57px]" />
      </div>
      <div className="mt-[22px] flex min-h-0 flex-1 flex-col overflow-hidden border-l border-t border-[#c6c6c6] bg-white">
        <div className="h-[54px] shrink-0" />
        <H />
        <div className="flex shrink-0">
          <SideNote rows={["h-[31px]", "h-5", "h-4", "h-[30px]", "h-[22px]", "h-[6px]", "h-[103px]"]}>
            <Item lines={CAPEX_B} />
            <Item term="operational" lines={OPEX} />
          </SideNote>
          <div className="flex flex-1 flex-col">
            <LegendBand
              left={<div className="w-[418px] shrink-0" />}
              right={
                <div className="flex w-[403px] shrink-0 flex-col">
                  <div className="h-[31px]" />
                  <H />
                  <ShareNote h="h-5" />
                  <H />
                  <div className="h-4" />
                </div>
              }
              fill={["h-[31px]", "h-5", "h-4"]}
            />
            <H />
            <Footnote rows={["h-[30px]", "h-[22px]", "h-[6px]"]} />
          </div>
        </div>
        <H />
        <div className="h-[31px] shrink-0" />
        <H />
        <Question text={HEAD_1} lead="w-[46px]" width="w-[796px]" inner="h-[22px]" />
        <H />
        <div className="h-[18px] shrink-0" />
        <H />
        <Answer lead="w-[377px]" width="w-[796px]" h="h-[46px]">{STRING}</Answer>
        <H />
        <div className="h-6 shrink-0" />
        <H />
        <Question text={HEAD_2} lead="w-[30px]" width="w-[812px]" inner="h-[22px]" />
      </div>
      <p className="absolute left-[430px] top-[841px] whitespace-nowrap font-['Liberation_Sans',sans-serif] text-[33px] leading-10 text-[#ee1111]">
        Using the Use page headers and footers property
      </p>
      <svg width="104" height="84" viewBox="0 0 104 84" className="absolute left-[348px] top-[830px]" fill="#ef3a3a">
        <path d="M5 4l25 8-7 6c20 23 46 43 80 59l-2 5C65 66 40 46 19 22l-4 7z" />
      </svg>
    </main>
  );
}

function ScrollButton({ label, d, className }: { label: string; d: string; className: string }) {
  return (
    <button type="button" aria-label={label} className={`flex shrink-0 items-center justify-center border border-[#999] bg-white ${className}`}>
      <svg width="12" height="12" viewBox="0 0 12 12" fill="#222"><path d={d} /></svg>
    </button>
  );
}

function JoinedDocument() {
  return (
    <main className="flex min-h-0 flex-1 flex-col bg-[#e6e6e6]">
      <div className="flex min-h-0 flex-1">
        <div className="relative ml-[30px] flex min-w-0 flex-1 flex-col overflow-hidden border-l border-[#c6c6c6] bg-white">
          <div className="h-[17px] shrink-0" />
          <H />
          <div className="h-[9px] shrink-0" />
          <H />
          <PeachBar className="h-[18px]" />
          <H />
          <Callout className="h-[120px]" />
          <H />
          <PeachBar className="h-[15px]" />
          <H />
          <div className="flex shrink-0">
            <div className="flex w-[293px] shrink-0 flex-col">
              <div className="h-4" />
              <H />
              <SideNote rows={R_NOTE}>
                {INTRO.map((line) => <div key={line}>{line}</div>)}
                <Item term="turnover" lines={TURNOVER} />
                <Item term="capital" lines={[...CAPEX_A, ...CAPEX_B]} />
                <Item term="operational" lines={OPEX} />
              </SideNote>
            </div>
            <div className="flex flex-1 flex-col">
              <Charts tall={false} fillRows={["h-4", "h-[19px]", "h-[5px]", "h-[19px]", "h-[200px]", "h-[23px]"]} />
              <H />
              <LegendBand
                left={
                  <div className="flex flex-col">
                    <Legend heights={R_LEGEND} indent="w-[47px]" width="w-[418px]" />
                    <H />
                  </div>
                }
                right={
                  <div className="flex flex-col">
                    <Legend heights={R_LEGEND} indent="w-8" width="w-[403px]" />
                    <H />
                    <div className="h-[31px]" />
                    <H />
                    <ShareNote h="h-[18px]" />
                    <H />
                    <div className="h-[6px]" />
                  </div>
                }
                fill={[...R_LEGEND, "h-[31px]", "h-[18px]", "h-[6px]"]}
              />
              <H />
              <Footnote rows={["h-[28px]", "h-[19px]", "h-[6px]"]} />
            </div>
          </div>
          <H />
          <div className="h-[31px] shrink-0" />
          <H />
          <Question text={HEAD_1} lead="w-[46px]" width="w-[796px]" inner="h-[21px]" />
          <H />
          <div className="h-[18px] shrink-0" />
          <H />
          <Answer lead="w-[377px]" width="w-[796px]" h="h-[46px]">{STRING}</Answer>
          <H />
          <div className="h-[23px] shrink-0" />
          <H />
          <Question text={HEAD_2} lead="w-[30px]" width="w-[812px]" inner="h-[21px]" />
          <H />
          <H />
          <Answer lead="w-[361px]" width="w-[812px]" h="h-[26px]" bold>with previous reference periods?</Answer>
          <H />
          <div className="h-[18px] shrink-0" />
          <H />
          <Answer lead="w-[361px]" width="w-[812px]" h="h-[58px]">{STRING}</Answer>
          <H />
          <div className="h-[6px] shrink-0" />
          <H />
          <p className="absolute left-[289px] top-[727px] whitespace-nowrap font-['Liberation_Sans',sans-serif] text-[33px] leading-10 text-[#ee1111]">
            Without using the Use page headers and footers property
          </p>
          <svg width="70" height="68" viewBox="0 0 70 68" className="absolute left-[192px] top-[720px]" fill="#ef3a3a">
            <path d="M68 1l-9 24-5-6L5 65l-3-4 48-46-6-5z" />
          </svg>
        </div>
        <div className="flex w-[26px] shrink-0 flex-col bg-[#f2f2f2] pr-px pt-px">
          <ScrollButton label="Вверх" d="M1 9h10L6 3z" className="h-[25px]" />
          <div className="h-[582px] shrink" />
          <div className="h-[111px] shrink-0 border border-[#999] bg-white" />
          <div className="flex-1" />
          <ScrollButton label="Вниз" d="M1 3h10L6 10z" className="h-[25px]" />
        </div>
      </div>
      <div className="flex h-[26px] shrink-0 pb-0.5 pl-0.5 pr-7">
        <ScrollButton label="Влево" d="M9 0v12L4 6z" className="w-[25px]" />
        <div className="flex flex-1 bg-[#f2f2f2]">
          <div className="w-[94%] border border-l-0 border-[#999] bg-white" />
        </div>
        <ScrollButton label="Вправо" d="M4 0v12l5-6z" className="w-[25px]" />
      </div>
    </main>
  );
}

/* ---------- status bar ---------- */

function StatusBar({ language }: { language: string }) {
  return (
    <footer className="flex h-8 shrink-0 items-stretch border-t border-[#c0c0c0] bg-[#f3f3f3] text-[15px] text-[#444]">
      <div className="flex items-center whitespace-nowrap pl-[11px]">
        <span className="w-[143px]">Страница 4 из 6</span>
        <span className="w-[150px]">Число слов: 1285</span>
        <svg width="22" height="19" viewBox="0 0 22 19" fill="none" stroke="#666" strokeWidth="1.2">
          <path d="M10 3v15M10 3L7 1H1v15h6l3 2 3-2h2M10 3l3-2h5v5" />
          <path d="M12 10l4 4 6-9" strokeWidth="2" />
        </svg>
        <span className="ml-6 w-[159px]">{language}</span>
        <svg width="21" height="19" viewBox="0 0 21 19" fill="none" stroke="#555">
          <circle cx="5" cy="5" r="4.5" fill="#555" />
          <path d="M11 3h9v3h-9z" fill="#555" />
          <path d="M3.500 10v8.500h16V3M6 10h2M10 10h3M15 10h2M6 13h2M10 13h3M15 13h2M6 16h2M10 16h3M15 16h2" />
        </svg>
      </div>
      <div className="ml-auto flex items-stretch">
        <button type="button" aria-label="Режим чтения" className="px-5">
          <svg width="20" height="18" viewBox="0 0 20 18" fill="none" stroke="#777">
            <path d="M10 2v15M10 2L8 0.500H0.500v14.500H8l2 2 2-2h7.500V0.500H12zM3 4h4M3 7h4M3 10h4M13 4h4M13 7h4M13 10h4" />
          </svg>
        </button>
        <button type="button" aria-label="Разметка страницы" className="w-[60px] bg-[#c6c6c6]">
          <svg width="18" height="18" viewBox="0 0 18 18" fill="none" stroke="#666" className="mx-auto">
            <path d="M0.500 0.500h17v17H0.500zM4 4.500h10M4 7.500h10M4 10.500h10M4 13.500h10" />
          </svg>
        </button>
        <button type="button" aria-label="Веб-документ" className="pl-5 pr-[26px]">
          <svg width="21" height="19" viewBox="0 0 21 19" fill="none" stroke="#777">
            <path d="M9 16.500H0.500v-16h15V7M3 4.500h10M3 7.500h8M3 10.500h6M3 13.500h5" />
            <circle cx="14.5" cy="13" r="5.5" fill="#777" />
            <path d="M12 11l3 1-1 4M16 9l2 4" stroke="#f3f3f3" strokeWidth="1.3" />
          </svg>
        </button>
        <button type="button" aria-label="Уменьшить" className="w-[16px]">
          <svg width="12" height="12" viewBox="0 0 12 12" stroke="#444" strokeWidth="1.5"><path d="M0 6h12" /></svg>
        </button>
        <input
          type="range"
          aria-label="Масштаб"
          min={0}
          max={100}
          defaultValue={50}
          className="ml-1.5 mr-1.5 w-[148px] appearance-none bg-transparent [&::-webkit-slider-runnable-track]:h-[3px] [&::-webkit-slider-runnable-track]:bg-[#333] [&::-webkit-slider-thumb]:-mt-2 [&::-webkit-slider-thumb]:h-[19px] [&::-webkit-slider-thumb]:w-[9px] [&::-webkit-slider-thumb]:appearance-none [&::-webkit-slider-thumb]:bg-[#333]"
        />
        <button type="button" aria-label="Увеличить" className="w-4 pl-0.5">
          <svg width="12" height="12" viewBox="0 0 12 12" stroke="#444" strokeWidth="1.5"><path d="M0 6h12M6 0v12" /></svg>
        </button>
        <span className="flex w-[84px] items-center pl-4">100%</span>
      </div>
    </footer>
  );
}

function WordWindow({ title, active, language, children }: { title: string; active: boolean; language: string; children: ReactNode }) {
  return (
    <section className={`flex min-w-0 flex-1 flex-col overflow-hidden border-x-2 border-t-2 ${active ? "border-[#2b579a]" : "border-[#808080] border-r-[#555]"}`}>
      <TitleBar title={title} active={active} />
      <TabBar />
      <Ribbon />
      <div className="flex min-h-0 flex-1 flex-col font-['Carlito','Lato',sans-serif] [font-variant-ligatures:none]">{children}</div>
      <StatusBar language={language} />
    </section>
  );
}

export default function App() {
  return (
    <div className="flex h-screen overflow-hidden bg-[#e6e6e6] font-['Open_Sans','Noto_Sans',sans-serif]">
      <WordWindow title="Test4.docx  -  Word" active={false} language="русский">
        <SplitDocument />
      </WordWindow>
      <WordWindow title="Test5.docx  -  Word" active language="английский (США)">
        <JoinedDocument />
      </WordWindow>
    </div>
  );
}
